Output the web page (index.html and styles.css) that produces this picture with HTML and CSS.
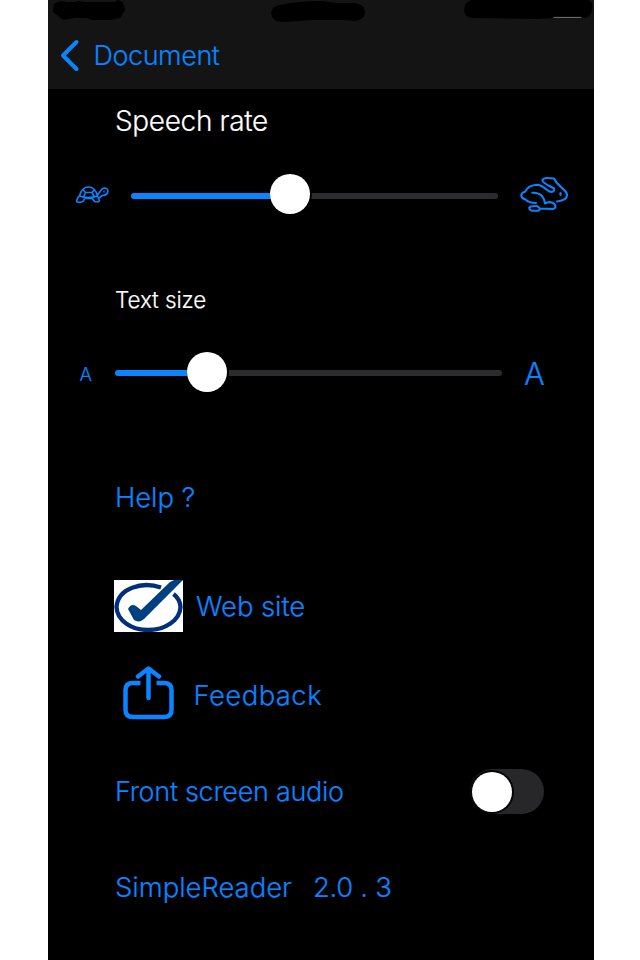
FILE: index.html
```html
<!DOCTYPE html>
<html lang="en">
<head>
<meta charset="utf-8">
<title>SimpleReader settings</title>
<link rel="stylesheet" href="styles.css">
</head>
<body>
<main class="phone">
  <header class="bar">
    <svg class="status" viewBox="0 0 546 30" aria-hidden="true">
      <path d="M6 4Q10 0 19 2H28Q31 0 36 2H67L70 0 75 2 77 10 72 18 62 20H44L39 18Q30 18 27 18L15 20 5 12Z"/>
      <path d="M232 5Q250 1 275 1L288 3H306Q317 4 317 12T307 21L296 20H265L235 22Q224 22 223 13 224 6 232 5Z"/>
      <path d="M423 0H540Q546 2 544 10 543 17 536 18H505L490 19 425 18Q416 17 416 10 417 2 423 0Z"/>
      <path class="status-line" d="M506 17.4H533"/>
    </svg>
    <a class="back">
      <svg class="chevron" viewBox="0 0 20 34" aria-hidden="true"><path d="M16.500 3 3 16.500 16.500 30"/></svg>
      <span class="t-document">Document</span>
    </a>
  </header>
  <h2 class="row title t-speech">Speech rate</h2>
  <div class="row slider-row rate">
    <svg class="turtle" viewBox="0 0 34 20" aria-hidden="true">
      <path d="M3.500 11C5 5 8 2 12.500 2S20 5 21.500 11M3.500 11Q12 14 21.500 11M9.500 7.500H16L18.500 12M9.500 7.500 7 4.500M16 7.500 18.500 4.500M9.500 7.500 7.500 12M3 11Q0 15 1 17 5 18 7.500 16L8.500 13.500H16.500L18 16Q21 18 23.500 16L22 12M21.500 10 24.500 6Q26 3 29 3 33 4 31.500 8 30 10.500 26.500 10.500L23 13"/>
      <circle cx="28" cy="6.500" r=".3"/>
    </svg>
    <div class="slider"><div class="fill"></div><div class="rest"></div><div class="knob"></div></div>
    <svg class="rabbit" viewBox="0 0 50 38" aria-hidden="true">
      <path d="M16 27Q9 27 5.500 23.500 1 22 1.300 19 2 16 5 15.700C8 10 13 9 17 8.800 22 9 25 13 29 15.200 33 17 34.500 14.800 34 12.500 29 9.500 22 7 22.300 4 24 1.500 27 1.700 34 2.500 38.300 11.700 46 12.500 47 18.500 47.500 24 41.700 25 37 25.500 33.500 22.500"/>
      <path d="M12.300 16.700Q19 16.500 22 20 24.500 23 25 27.500 30 24.500 34.500 28 37 32 33 33L20 32.500Q20 35 16 34.800H12Q9 34 9.300 31.500 11 29.800 17 30L20 32.500"/>
      <ellipse cx="40.500" cy="18" rx=".2" ry="1"/>
    </svg>
  </div>
  <h2 class="row title t-size">Text size</h2>
  <div class="row slider-row size">
    <span class="small-a">A</span>
    <div class="slider"><div class="fill"></div><div class="rest"></div><div class="knob"></div></div>
    <span class="large-a">A</span>
  </div>
  <a class="row help t-help">Help ?</a>
  <a class="row website">
    <svg class="check" viewBox="0 0 69 52" aria-hidden="true">
      <path d="M47 7.500C28 1 4 8 2.500 27 3 41 18 50 34 50S66 41 66.500 27Q66 19 59.500 14"/>
      <path class="tick" d="M14 29Q17 23 22 26L27 30 56 2 60 0H69L32 37Q26 44 20 40Z"/>
    </svg>
    <span class="t-web">Web site</span>
  </a>
  <a class="row feedback">
    <svg class="share" viewBox="0 0 52 54" aria-hidden="true"><path stroke-linecap="butt" d="M17.500 17H10Q2.500 17 2.500 24V44Q2.500 51 10 51H41Q48.500 51 48.500 44V24Q48.500 17 41 17H33.500"/><path d="M25.500 32V3M15 10.500 25.500 2.500 36 10.500"/></svg>
    <span class="t-feedback">Feedback</span>
  </a>
  <div class="row audio">
    <span class="t-audio">Front screen audio</span>
    <div class="toggle"><div class="toggle-knob"></div></div>
  </div>
  <div class="row version"><span class="t-name">SimpleReader</span><span class="t-version">2.0 . 3</span></div>
</main>
</body>
</html>
```

FILE: styles.css
```css
* { box-sizing: border-box; }
body { margin: 0; background: #fff; }
.phone {
  width: 546px;
  height: 960px;
  margin-left: 47.5px;
  background: #000;
  color: #0a84ff;
  font: 300 27.5px/60px Inter, "Liberation Sans", sans-serif;
  white-space: nowrap;
  overflow: hidden;
}
svg { display: block; flex: none; fill: none; stroke: currentColor; stroke-linecap: round; stroke-linejoin: round; }
.bar { height: 89px; background: #141414; }
.status { width: 546px; height: 30px; fill: #000; stroke: none; }
.status-line { stroke: #777; stroke-width: 1; }
.back { display: flex; align-items: center; height: 52px; padding-left: 12px; }
.chevron { width: 20px; height: 34px; margin-right: 14px; stroke-width: 4; }
.t-document { font-size: 27px; letter-spacing: -0.45px; -webkit-text-stroke: 0.2px; }
.row { display: flex; align-items: center; height: 60px; margin: 0; padding-left: 67.5px; font-weight: 300; -webkit-text-stroke: 0.2px; }
.title { color: #fff; }
.t-speech { margin-top: 2px; font-size: 28px; letter-spacing: -0.35px; }
.rate { margin-top: 14px; padding-left: 28px; }
.turtle { width: 34px; height: 20px; margin-right: 21px; stroke-width: 1.6; }
.slider { position: relative; display: flex; align-items: center; height: 40px; }
.fill, .rest { height: 6px; border-radius: 3px; }
.fill { background: #0a84ff; }
.rest { flex: 1; background: #2c2c2e; }
.knob { position: absolute; top: 0; width: 40px; height: 40px; border-radius: 50%; background: #fff; box-shadow: 1px 0 0 1px #000; }
.rate .slider { width: 367px; top: 0.5px; }
.rate .fill { width: 150px; }
.rate .knob { left: 139px; top: -1.5px; }
.rabbit { width: 50px; height: 38px; margin-left: 22px; stroke-width: 2.1; }
.t-size { margin-top: 45px; font-size: 22.5px; letter-spacing: -0.1px; }
.size { margin-top: 13px; padding-left: 32px; }
.small-a { width: 35px; padding-top: 1px; font-size: 18.5px; }
.size .slider { width: 387px; }
.size .fill { width: 85px; }
.size .knob { left: 72.5px; top: -1px; }
.large-a { margin-left: 22.5px; padding-top: 1px; font-size: 31px; }
.help { margin-top: 64px; letter-spacing: -0.1px; }
.website { margin-top: 49px; padding-left: 66.5px; }
.check { width: 69px; height: 52px; margin-right: 13px; background: #fff; color: #00307c; stroke-width: 4.3; stroke-linecap: butt; }
.check .tick { fill: #003f80; stroke: none; }
.t-web { letter-spacing: -0.1px; }
.feedback { margin-top: 29px; padding-left: 75px; }
.share { width: 52px; height: 54px; margin-right: 19px; margin-top: -5px; stroke-width: 4.5; }
.t-feedback { letter-spacing: 0.4px; }
.audio { margin-top: 36px; }
.t-audio { padding-top: 1px; font-size: 27px; letter-spacing: -0.3px; }
.toggle { display: flex; align-items: center; width: 74px; height: 45px; margin-left: auto; margin-right: 49.5px; margin-top: 1px; padding-left: 2px; border-radius: 23px; background: #27272a; }
.toggle-knob { width: 40px; height: 40px; border-radius: 50%; background: #fff; box-shadow: 0 0 0 2px #050507; }
.version { margin-top: 36px; }
.t-name { letter-spacing: -0.05px; }
.t-version { margin-left: 21px; letter-spacing: -0.3px; }
```
